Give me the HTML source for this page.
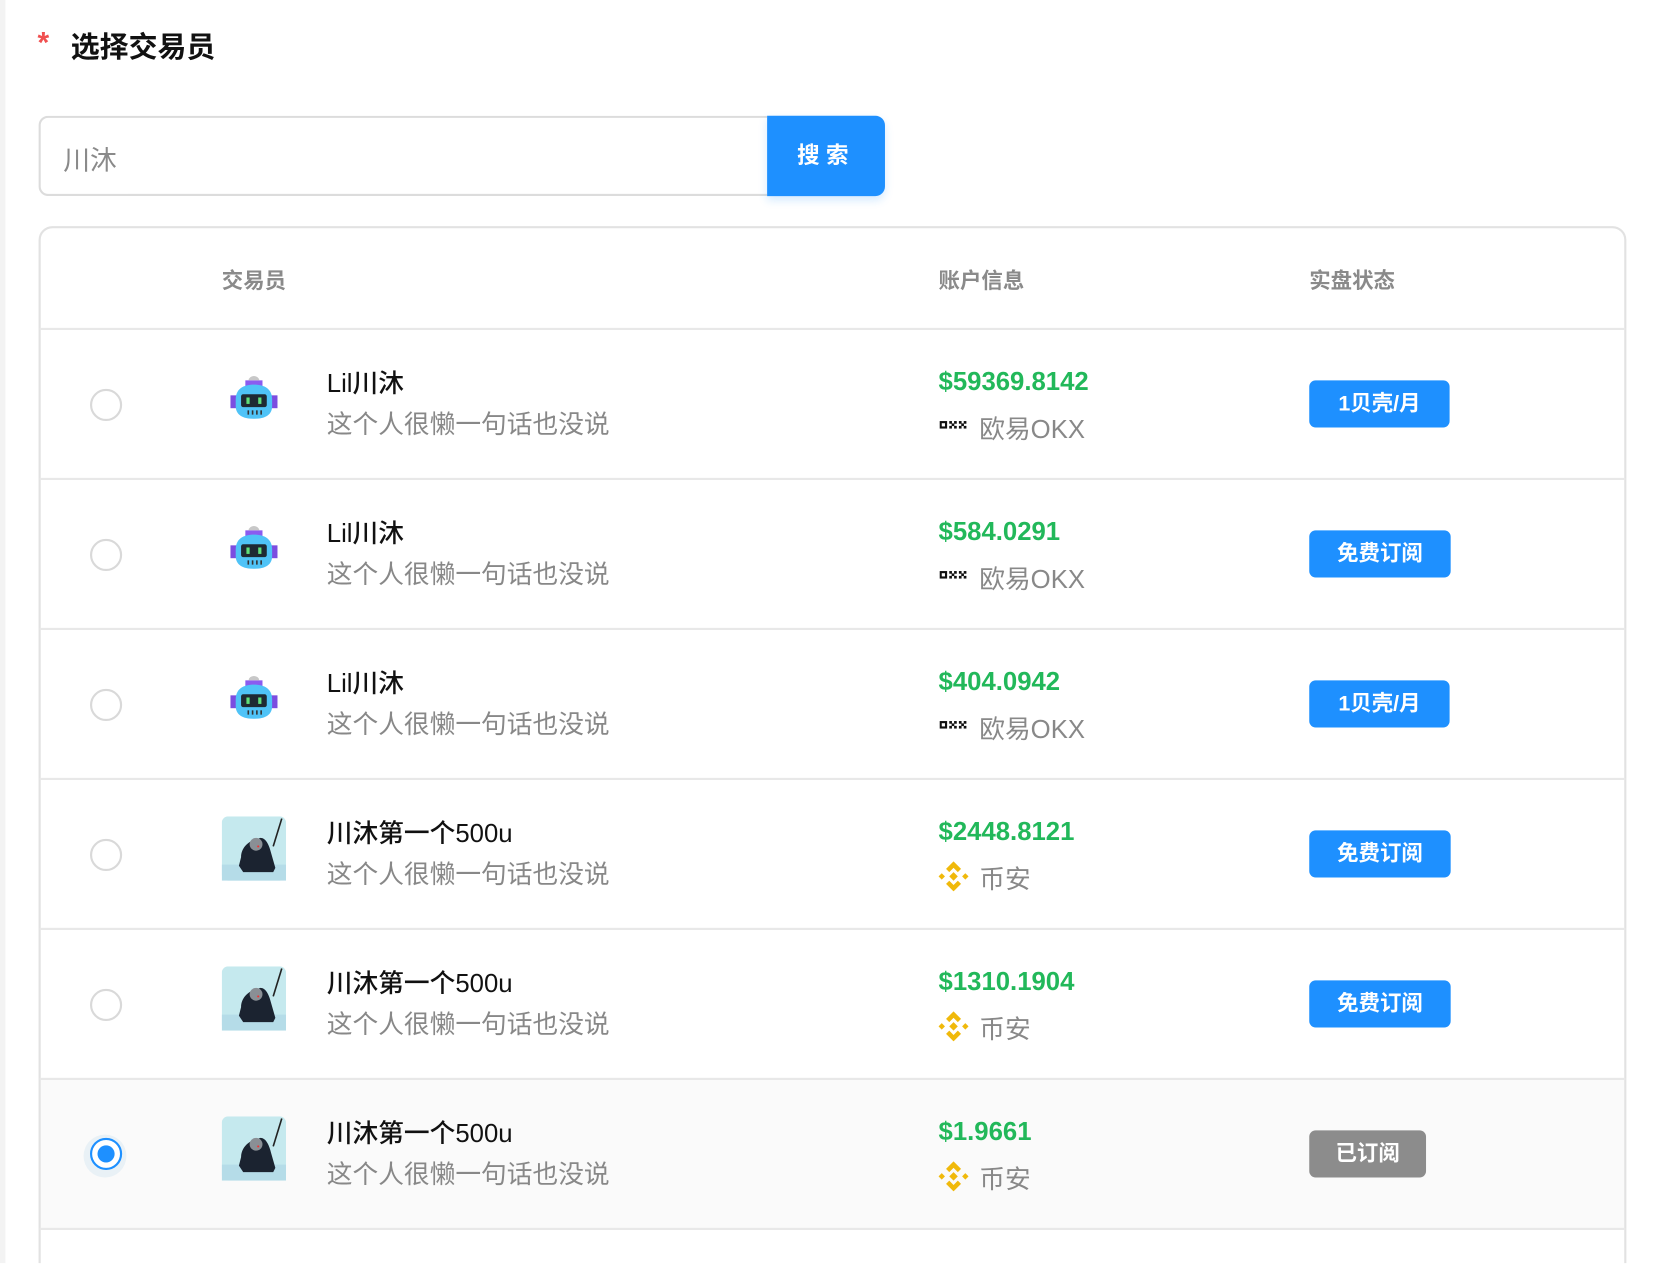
<!DOCTYPE html>
<html><head><meta charset="utf-8"><style>
html,body{margin:0;padding:0;width:1680px;height:1264px;overflow:hidden;background:#fff}
#w{position:absolute;left:0;top:0;width:1568px;height:1179px;overflow:hidden;transform:scale(1.0714);transform-origin:0 0;font-family:"Liberation Sans","Noto Sans CJK SC",sans-serif}
.strip{position:absolute;left:0;top:0;width:5px;height:1180px;background:#f3f3f3}
.abs{position:absolute}
.title{left:66px;top:22px;font-size:27px;font-weight:bold;color:#111}
.star{left:35px;top:24px;color:#f05050;font-size:28px;font-weight:bold}
.inp{left:36px;top:108px;width:680px;height:75px;box-sizing:border-box;border:2px solid #dcdcdc;border-right:none;border-radius:9px 0 0 9px}
.inp span{position:absolute;left:21px;top:20px;font-size:25px;color:#8a8a8a}
.btn{left:716px;top:108px;width:110px;height:75px;background:#1e90ff;border-radius:0 9px 9px 0;color:#fff;font-weight:bold;font-size:21px;text-align:center;line-height:75px;letter-spacing:6px;box-shadow:0 4px 8px rgba(30,144,255,.18)}
.tbl{left:36px;top:211px;width:1482px;height:1100px;box-sizing:border-box;border:2px solid #e2e2e2;border-radius:13px}
.th{top:246px;font-size:20px;font-weight:bold;color:#8a8a8a}
.line{left:37px;width:1480px;height:2px;background:#e8e8e8}
.radio{left:84px;width:26px;height:26px;border:2px solid #d9d9d9;border-radius:50%;background:#fff}
.name{left:305px;font-size:24px;color:#111;font-weight:500}
.desc{left:305px;font-size:24px;color:#888}
.amt{left:876px;font-size:24px;color:#22b85a;font-weight:bold}
.ex{left:914px;font-size:24px;color:#888}
.badge{left:1222px;height:44px;border-radius:6px;background:#1e90ff;color:#fff;font-weight:bold;font-size:20px;text-align:center;line-height:44px}
</style></head><body><div id="w">
<div class="strip"></div>
<div class="abs star">*</div>
<div class="abs title">选择交易员</div>
<div class="abs inp"><span>川沐</span></div>
<div class="abs btn">搜索</div>
<div class="abs" style="left:37px;top:1007px;width:1480px;height:140px;background:#fafafa"></div>
<div class="abs tbl"></div>
<div class="abs th" style="left:207px">交易员</div>
<div class="abs th" style="left:876px">账户信息</div>
<div class="abs th" style="left:1222px">实盘状态</div>
<div class="abs line" style="top:306px"></div>
<div class="abs line" style="top:446px"></div>
<div class="abs line" style="top:586px"></div>
<div class="abs line" style="top:726px"></div>
<div class="abs line" style="top:866px"></div>
<div class="abs line" style="top:1006px"></div>
<div class="abs line" style="top:1146px"></div>

<svg width="0" height="0" style="position:absolute"><defs>
<g id="robot"><rect x="14" y="4" width="16" height="6" fill="#8a5cf0"/><path d="M17 4a5 4 0 0 1 10 0z" fill="#c8c8c8"/><rect x="0" y="18" width="6" height="12" fill="#7b4de0"/><rect x="38" y="18" width="6" height="12" fill="#7b4de0"/><path d="M5 22c0-10 7-14 17-14s17 4 17 14v6c0 8-6 12-17 12S5 36 5 28z" fill="#4fc3f7"/><rect x="10" y="17" width="24" height="12" rx="2" fill="#1e2a33"/><rect x="15" y="20" width="3" height="6" fill="#5fe07a"/><rect x="26" y="20" width="3" height="6" fill="#5fe07a"/><g fill="#333"><rect x="16" y="32" width="1.5" height="4"/><rect x="20" y="32" width="1.5" height="4"/><rect x="24" y="32" width="1.5" height="4"/><rect x="28" y="32" width="1.5" height="4"/></g></g>
<g id="photo"><rect width="60" height="60" rx="6" fill="#c5e9ee"/><rect y="45" width="60" height="15" fill="#b5dce8"/><path d="M18 38c0-8 6-14 12-16l6-2c5 0 8 6 10 14l4 14-2 4H20l-4-6z" fill="#1b2330"/><circle cx="32" cy="26" r="6" fill="#8a8f95"/><path d="M48 28l8-26" stroke="#222" stroke-width="1.5"/><circle cx="34" cy="28" r="1" fill="#e33"/></g>
<g id="okx" fill="#111"><rect x="0" y="0" width="7" height="7"/><rect x="2" y="2" width="3" height="3" fill="#fff"/><rect x="9" y="0" width="2.5" height="2.5"/><rect x="13.5" y="0" width="2.5" height="2.5"/><rect x="11.2" y="2.2" width="2.5" height="2.5"/><rect x="9" y="4.5" width="2.5" height="2.5"/><rect x="13.5" y="4.5" width="2.5" height="2.5"/><rect x="18" y="0" width="2.5" height="2.5"/><rect x="22.5" y="0" width="2.5" height="2.5"/><rect x="20.2" y="2.2" width="2.5" height="2.5"/><rect x="18" y="4.5" width="2.5" height="2.5"/><rect x="22.5" y="4.5" width="2.5" height="2.5"/></g>
<g id="bnb" fill="#f0b90b"><path d="M14 0l7 7-3 3-4-4-4 4-3-3z"/><path d="M14 28l7-7-3-3-4 4-4-4-3 3z"/><path d="M0 14l3-3 3 3-3 3z"/><path d="M28 14l-3-3-3 3 3 3z"/><path d="M14 10l4 4-4 4-4-4z"/></g>
</defs></svg>

<div id="rows"></div>
<script>
var rows=[
["r","Lil川沐","$59369.8142","o","1贝壳/月",131,0],
["r","Lil川沐","$584.0291","o","免费订阅",132,0],
["r","Lil川沐","$404.0942","o","1贝壳/月",131,0],
["p","川沐第一个500u","$2448.8121","b","免费订阅",132,0],
["p","川沐第一个500u","$1310.1904","b","免费订阅",132,0],
["p","川沐第一个500u","$1.9661","b","已订阅",109,1]];
var h="";
rows.forEach(function(r,i){var t=307+i*140;
if(r[6]) h+='<div class="abs" style="left:78px;top:'+(t+52)+'px;width:40px;height:40px;border-radius:50%;background:#e9f1f6"></div><div class="abs radio" style="top:'+(t+55)+'px;border-color:#1e90ff"></div><div class="abs" style="left:91px;top:'+(t+62)+'px;width:16px;height:16px;border-radius:50%;background:#1e90ff"></div>';
else h+='<div class="abs radio" style="top:'+(t+56)+'px"></div>';
if(r[0]=="r") h+='<svg class="abs" style="left:215px;top:'+(t+44)+'px" width="44" height="40"><use href="#robot"/></svg>';
else h+='<svg class="abs" style="left:207px;top:'+(t+35)+'px" width="60" height="60"><use href="#photo"/></svg>';
h+='<div class="abs name" style="top:'+(t+31)+'px">'+r[1]+'</div>';
h+='<div class="abs desc" style="top:'+(t+69)+'px">这个人很懒一句话也没说</div>';
h+='<div class="abs amt" style="top:'+(t+36)+'px">'+r[2]+'</div>';
if(r[3]=="o"){h+='<svg class="abs" style="left:877px;top:'+(t+86)+'px" width="26" height="8"><use href="#okx"/></svg><div class="abs ex" style="top:'+(t+74)+'px">欧易OKX</div>';}
else {h+='<svg class="abs" style="left:876px;top:'+(t+77)+'px" width="28" height="28" viewBox="0 0 28 28"><use href="#bnb"/></svg><div class="abs ex" style="top:'+(t+74)+'px">币安</div>';}
h+='<div class="abs badge" style="top:'+(t+48)+'px;width:'+r[5]+'px;'+(r[6]?'background:#8c8c8c':'')+'">'+r[4]+'</div>';
});
document.getElementById("rows").innerHTML=h;
</script>
</div></body></html>
